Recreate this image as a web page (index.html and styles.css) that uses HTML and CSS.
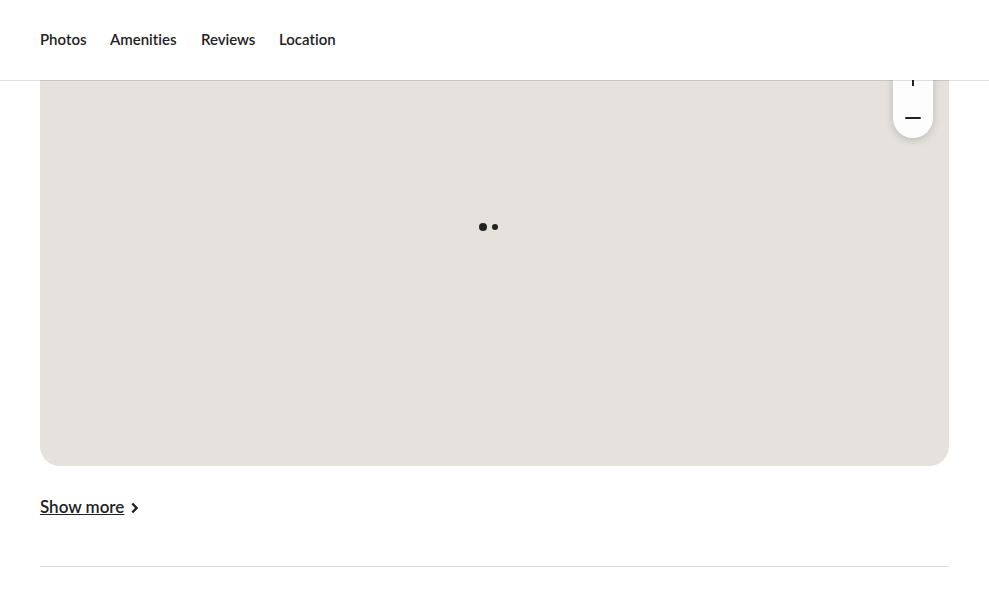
FILE: index.html
```html
<!DOCTYPE html>
<html lang="en">
<head>
<meta charset="utf-8">
<title>Location</title>
<link rel="stylesheet" href="styles.css">
</head>
<body>
<header class="header">
  <nav class="nav">
    <a class="photos">Photos</a>
    <a class="amenities">Amenities</a>
    <a class="reviews">Reviews</a>
    <a class="location">Location</a>
  </nav>
</header>
<main class="content">
  <section class="map">
    <div class="zoom">
      <svg class="plus" viewBox="0 0 16 16"><path d="M8 0v16M0 8h16"/></svg>
      <svg class="minus" viewBox="0 0 16 16"><path d="M1 8h14"/></svg>
    </div>
    <div class="loader"><i class="dot dot-large"></i><i class="dot dot-small"></i></div>
  </section>
  <a class="more"><span class="more-label">Show more</span><svg class="chevron" viewBox="0 0 12 12"><path d="M3.3 1.5 7.6 6 3.3 10.5"/></svg></a>
  <hr class="divider">
</main>
</body>
</html>
```
FILE: styles.css
```css
* { box-sizing: border-box; }
body {
  margin: 0;
  height: 609px;
  overflow: hidden;
  background: #fff;
  color: #222;
  font-family: Lato, "Liberation Sans", sans-serif;
  font-variant-ligatures: none;
}
.header {
  height: 81px;
  padding: 0 40px;
  border-bottom: 1px solid rgba(0, 0, 0, .12);
  position: relative;
  z-index: 1;
  background: #fff;
  background-clip: padding-box;
}
.nav {
  display: flex;
  align-items: center;
  gap: 24px;
  height: 78px;
  font-size: 15px;
  font-weight: 600;
  line-height: 18px;
  white-space: nowrap;
}
.photos { width: 46px; }
.amenities { width: 67px; }
.reviews { width: 54px; letter-spacing: -.05px; }
.location { width: 58px; }
.content { padding: 0 40px; }
.map {
  height: 386px;
  margin-top: -1px;
  border-radius: 0 0 20px 20px;
  background: #e5e2dd;
  position: relative;
}
.zoom {
  position: absolute;
  top: -22px;
  right: 16px;
  width: 40px;
  height: 80px;
  border-radius: 20px;
  background: #fdfdfd;
  box-shadow: 0 2px 8px rgba(0, 0, 0, .18);
  display: flex;
  flex-direction: column;
  align-items: center;
  gap: 24px;
  padding-top: 12px;
}
.plus, .minus {
  width: 16px;
  height: 16px;
  fill: none;
  stroke: #222;
  stroke-width: 2;
  stroke-linecap: round;
}
.plus { stroke-linecap: butt; }
.loader {
  position: absolute;
  left: 439px;
  top: 143px;
  display: flex;
  align-items: center;
  gap: 5px;
  height: 8px;
}
.dot { border-radius: 50%; background: #222; }
.dot-large { width: 8px; height: 8px; }
.dot-small { width: 6px; height: 6px; }
.more {
  display: flex;
  align-items: center;
  gap: 5px;
  height: 20px;
  margin-top: 32px;
  font-size: 17px;
  font-weight: 600;
  line-height: 20px;
}
.more-label {
  width: 84px;
  margin-top: -2px;
  text-decoration: underline;
  text-decoration-thickness: 1px;
  text-underline-offset: 1px;
  text-decoration-skip-ink: none;
  letter-spacing: -.02px;
  white-space: nowrap;
}
.chevron {
  width: 12px;
  height: 12px;
  fill: none;
  stroke: #222;
  stroke-width: 2.4;
}
.divider {
  margin: 48px 0 0;
  border: 0;
  border-top: 1px solid #ddd;
}
```
